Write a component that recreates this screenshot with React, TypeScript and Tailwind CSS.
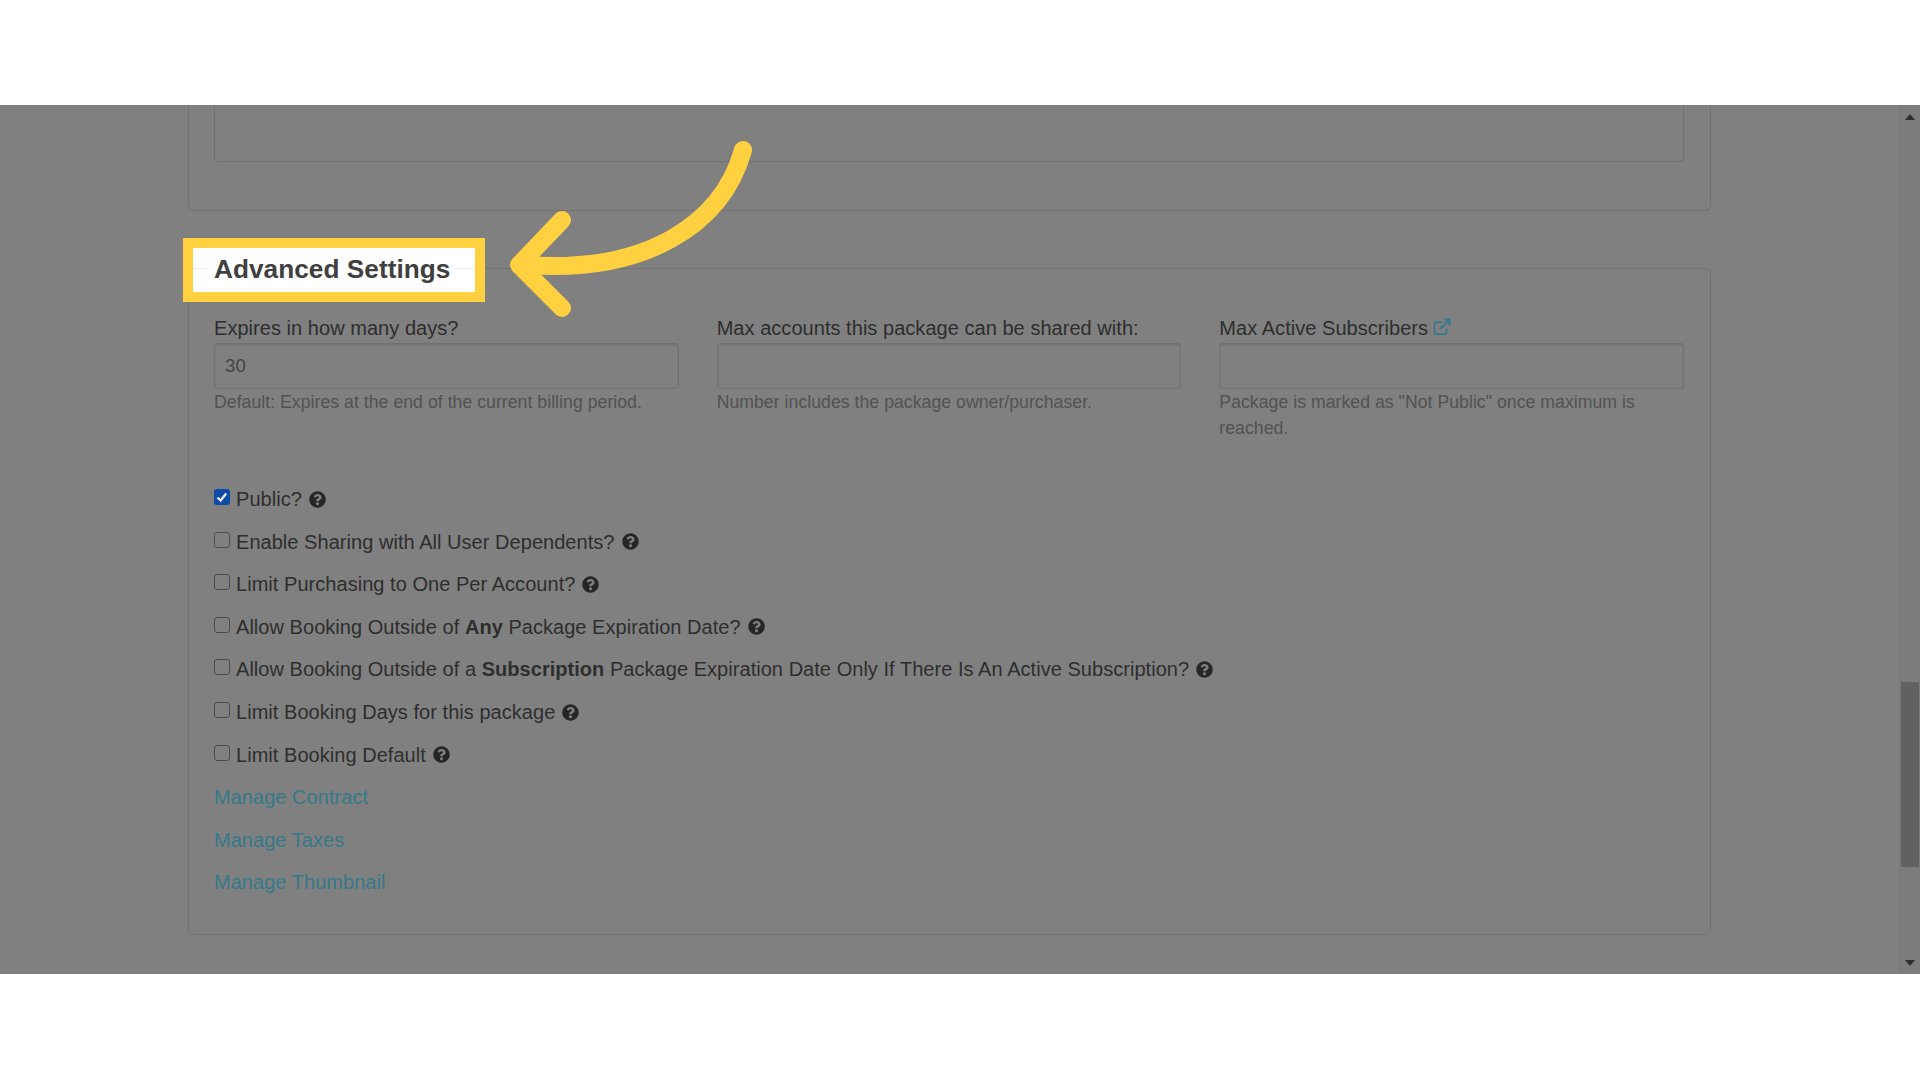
import { FaQuestionCircle } from "react-icons/fa";

const options = [
    { key: "public", label: <>Public?</>, checked: true },
    { key: "sharing", label: <>Enable Sharing with All User Dependents?</> },
    { key: "limit", label: <>Limit Purchasing to One Per Account?</> },
    { key: "any", label: <>Allow Booking Outside of <b className="font-bold">Any</b> Package Expiration Date?</> },
    { key: "sub", label: <>Allow Booking Outside of a <b className="font-bold">Subscription</b> Package Expiration Date Only If There Is An Active Subscription?</> },
    { key: "days", label: <>Limit Booking Days for this package</> },
    { key: "default", label: <>Limit Booking Default</> },
];

const links = ["Manage Contract", "Manage Taxes", "Manage Thumbnail"];

function Checkbox({ checked }: { checked?: boolean }) {
    if (checked) {
        return (
            <span className="w-4 h-4 -mt-[4px] rounded-[3px] bg-[#0b4ba6] flex items-center justify-center shrink-0">
                <svg viewBox="0 0 16 16" className="w-4 h-4" fill="none" stroke="#e8e8e8" strokeWidth="2.4">
                    <path d="M3.5 8.5 L6.6 11.5 L12.2 4.5" />
                </svg>
            </span>
        );
    }
    return <span className="w-4 h-4 -mt-[4px] rounded-[3px] border-[1.5px] border-[#4c4c4c] shrink-0" />;
}

function Field({ label, value, help, link }: { label: string; value?: string; help: string; link?: boolean }) {
    return (
        <div>
            <div className="h-[26px] leading-[26px] mb-[2px] text-[#2e2e2e] flex items-center gap-[5px]">
                {label}
                {link && (
                    <svg viewBox="0 0 18 18" className="w-[18px] h-[18px] -mt-[2px]" fill="none" stroke="#35798a" strokeWidth="1.7">
                        <path d="M13.5 10.5 V14 a2.2 2.2 0 0 1 -2.2 2.2 H3.7 A2.2 2.2 0 0 1 1.5 14 V6.4 A2.2 2.2 0 0 1 3.7 4.2 H9" />
                        <path d="M7 11 L16 2.2 M10.8 1.6 H16.6 V7.4" strokeWidth="2" />
                    </svg>
                )}
            </div>
            <div className="h-[46px] border border-[#717171] rounded-[3px] px-[10px] flex items-center text-[#444444] text-[18.6px] shadow-[inset_0_1px_2px_rgba(0,0,0,0.12)]">
                {value}
            </div>
            <p className="leading-[26px] text-[#525252] text-[17.65px]">{help}</p>
        </div>
    );
}

export default function App() {
    return (
        <div className="w-[1920px] h-[1080px] bg-white overflow-hidden font-['Liberation_Sans',Arial,sans-serif] text-[20px] tracking-[0.04px]">
            <div className="h-[105px]" />
            <div className="relative h-[869px] bg-[#808080] flex overflow-hidden">
                <div className="flex-1 pl-[188px]">
                    {/* top section, cut off by the scroll position */}
                    <div className="w-[1523px] h-[106px] border-x border-b border-[#727272] rounded-b-[6px] pl-[25px] pr-[26px]">
                        <div className="h-[57px] border-x border-b border-[#727272] rounded-b-[4px]" />
                    </div>

                    <div className="w-[1523px] h-[667px] mt-[57px] border border-[#727272] rounded-[6px] pl-[25px] pr-[26px] pt-[46px]">
                        <div className="grid grid-cols-3 gap-x-[38px] h-[126px]">
                            <Field label="Expires in how many days?" value="30" help="Default: Expires at the end of the current billing period." />
                            <Field label="Max accounts this package can be shared with:" help="Number includes the package owner/purchaser." />
                            <Field label="Max Active Subscribers" link help={'Package is marked as "Not Public" once maximum is reached.'} />
                        </div>

                        <div className="mt-[37px] flex flex-col">
                            {options.map((o) => (
                                <div key={o.key} className="h-[42.55px] flex items-center text-[#2e2e2e]">
                                    <Checkbox checked={o.checked} />
                                    <span className="ml-[6px] whitespace-nowrap">{o.label}</span>
                                    <FaQuestionCircle className="ml-[7px] w-[17px] h-[17px] text-[#262626]" />
                                </div>
                            ))}
                            {links.map((l) => (
                                <div key={l} className="h-[42.55px] flex items-center text-[#35798a]">{l}</div>
                            ))}
                        </div>
                    </div>
                </div>

                {/* scrollbar */}
                <div className="w-[21px] bg-[#7c7c7c] border-l border-[#787878] relative flex flex-col items-center justify-between pt-[9px] pb-[8px]">
                    <div className="w-0 h-0 border-x-[5px] border-x-transparent border-b-[6px] border-b-[#2e2e2e]" />
                    <div className="w-0 h-0 border-x-[5px] border-x-transparent border-t-[6px] border-t-[#2e2e2e]" />
                    <div className="absolute left-[1px] top-[577px] w-[18px] h-[185px] bg-[#616161]" />
                </div>

                {/* highlight annotation */}
                <div className="absolute left-[183px] top-[133px] w-[302px] h-[64px] border-[10px] border-[#ffd040] bg-white">
                    <div className="absolute left-0 right-0 top-[20px] h-px bg-[#eeeeee]" />
                    <div className="relative h-full flex items-center pb-[2px]">
                        <span className="ml-[16px] px-[5px] bg-white font-bold text-[26.2px] text-[#404040] leading-[30px] whitespace-nowrap">Advanced Settings</span>
                    </div>
                </div>
            </div>

            {/* arrow annotation */}
            <svg className="absolute left-0 top-0 w-[1920px] h-[1080px] pointer-events-none" viewBox="0 0 1920 1080" fill="none" stroke="#ffd040" strokeWidth="18" strokeLinecap="round" strokeLinejoin="round">
                <path d="M743 150 C 722 225 645 274 525 265" />
                <path d="M562 220 L519 265 L562 308" />
            </svg>
        </div>
    );
}
